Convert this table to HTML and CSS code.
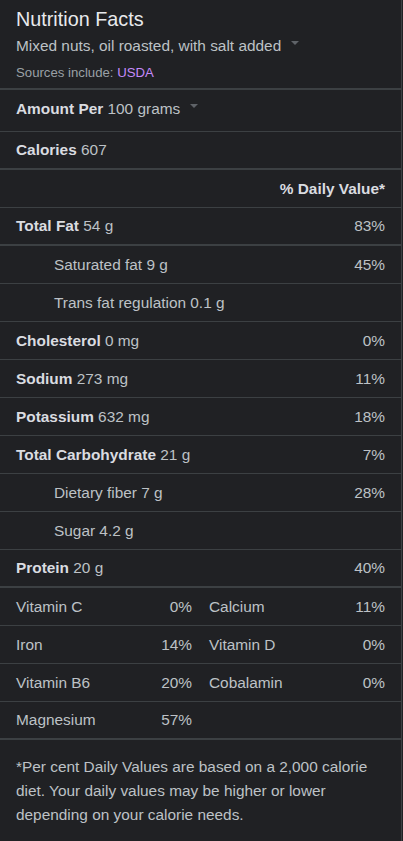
FILE: index.html
```html
<!DOCTYPE html>
<html>
<head>
<meta charset="utf-8">
<link rel="stylesheet" href="styles.css">
</head>
<body>
<div class="card">
  <div class="header">
    <div class="title">Nutrition Facts</div>
    <div class="subtitle">Mixed nuts, oil roasted, with salt added <span class="caret"></span></div>
    <div class="sources">Sources include: <span class="link">USDA</span></div>
  </div>
  <div class="row amount"><span><b>Amount Per</b> 100 grams</span><span class="caret"></span></div>
  <div class="row thick"><span><b>Calories</b> 607</span></div>
  <div class="row dv"><b>% Daily Value*</b></div>
  <div class="row thick"><span><b>Total Fat</b> 54 g</span><span>83%</span></div>
  <div class="row sub"><span>Saturated fat 9 g</span><span>45%</span></div>
  <div class="row sub"><span>Trans fat regulation 0.1 g</span></div>
  <div class="row"><span><b>Cholesterol</b> 0 mg</span><span>0%</span></div>
  <div class="row"><span><b>Sodium</b> 273 mg</span><span>11%</span></div>
  <div class="row"><span><b>Potassium</b> 632 mg</span><span>18%</span></div>
  <div class="row"><span><b>Total Carbohydrate</b> 21 g</span><span>7%</span></div>
  <div class="row sub"><span>Dietary fiber 7 g</span><span>28%</span></div>
  <div class="row sub"><span>Sugar 4.2 g</span></div>
  <div class="row thick"><span><b>Protein</b> 20 g</span><span>40%</span></div>
  <div class="row vit"><div class="half"><span>Vitamin C</span><span>0%</span></div><div class="half"><span>Calcium</span><span>11%</span></div></div>
  <div class="row vit"><div class="half"><span>Iron</span><span>14%</span></div><div class="half"><span>Vitamin D</span><span>0%</span></div></div>
  <div class="row vit"><div class="half"><span>Vitamin B6</span><span>20%</span></div><div class="half"><span>Cobalamin</span><span>0%</span></div></div>
  <div class="row vit thick"><div class="half"><span>Magnesium</span><span>57%</span></div><div class="half"></div></div>
  <div class="footnote">*Per cent Daily Values are based on a 2,000 calorie diet. Your daily values may be higher or lower depending on your calorie needs.</div>
</div>
</body>
</html>
```
FILE: styles.css
```css
html, body {
  margin: 0;
  padding: 0;
  background: #202124;
}
body {
  font-family: "Liberation Sans", Arial, sans-serif;
  color: #bdc1c6;
  font-size: 15.4px;
}
.card {
  width: 401px;
  min-height: 841px;
  border-right: 1px solid #3c4043;
  background: #202124;
}
.header {
  padding: 7px 16px 0 16px;
  height: 81px;
  border-bottom: 2px solid #3c4043;
}
.title {
  font-size: 19.8px;
  line-height: 24px;
  color: #e8eaed;
}
.subtitle {
  font-size: 15.4px;
  line-height: 20px;
  margin-top: 5px;
  color: #bdc1c6;
  display: flex;
  align-items: center;
  gap: 10px;
}
.sources {
  font-size: 13.2px;
  line-height: 16px;
  margin-top: 9px;
  color: #9aa0a6;
}
.link {
  color: #c58af9;
}
.caret {
  display: inline-block;
  width: 0;
  height: 0;
  border-left: 4px solid transparent;
  border-right: 4px solid transparent;
  border-top: 4px solid #5f6368;
  margin-bottom: 6px;
}
.row {
  height: 37px;
  padding: 0 16px;
  display: flex;
  align-items: center;
  justify-content: space-between;
  border-bottom: 1px solid #3c4043;
  line-height: 20px;
}
.row b {
  font-weight: bold;
  color: #dadce0;
}
.row.amount {
  height: 37px;
  padding-bottom: 4px;
  justify-content: flex-start;
  gap: 10px;
}
.row.thick {
  border-bottom-width: 2px;
  height: 36px;
}
.row.dv {
  justify-content: flex-end;
}
.row.sub {
  padding-left: 54px;
}
.row.vit {
  gap: 17px;
}
.half {
  flex: 1;
  display: flex;
  justify-content: space-between;
}
.footnote {
  padding: 15px 16px 0 16px;
  line-height: 24px;
  font-size: 15.4px;
  color: #bdc1c6;
}
```
